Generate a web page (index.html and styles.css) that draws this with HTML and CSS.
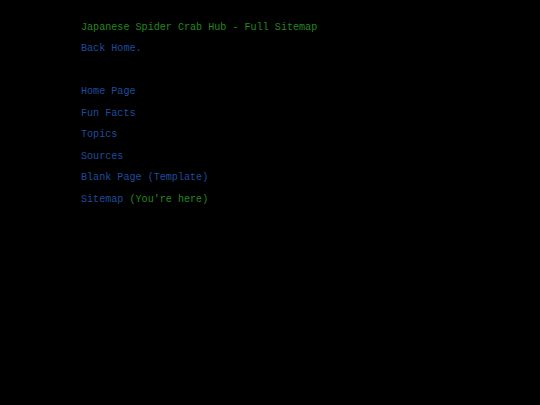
FILE: index.html
```html
<!DOCTYPE html>
<html>
<head>
<meta charset="utf-8">
<link rel="stylesheet" href="styles.css">
<title>Sitemap</title>
</head>
<body>
<div class="page">
  <div class="line title">Japanese Spider Crab Hub - Full Sitemap</div>
  <div class="line"><a class="link" href="#">Back Home.</a></div>
  <div class="line spacer"></div>
  <nav class="list">
    <div class="line"><a class="link" href="#">Home Page</a></div>
    <div class="line"><a class="link" href="#">Fun Facts</a></div>
    <div class="line"><a class="link" href="#">Topics</a></div>
    <div class="line"><a class="link" href="#">Sources</a></div>
    <div class="line"><a class="link" href="#">Blank Page (Template)</a></div>
    <div class="line"><a class="link" href="#">Sitemap</a> <span class="here">(You're here)</span></div>
  </nav>
</div>
</body>
</html>
```
FILE: styles.css
```css
html, body {
  margin: 0;
  padding: 0;
  background: #000;
  height: 100%;
}
.page {
  padding: 16.5px 0 0 81px;
  font-family: "Liberation Mono", "DejaVu Sans Mono", monospace;
  font-size: 10.1px;
}
.line {
  line-height: 21.5px;
  height: 21.5px;
  white-space: pre;
}
.title, .here {
  color: #22881f;
}
.link {
  color: #1f4c9e;
  text-decoration: none;
}
```
